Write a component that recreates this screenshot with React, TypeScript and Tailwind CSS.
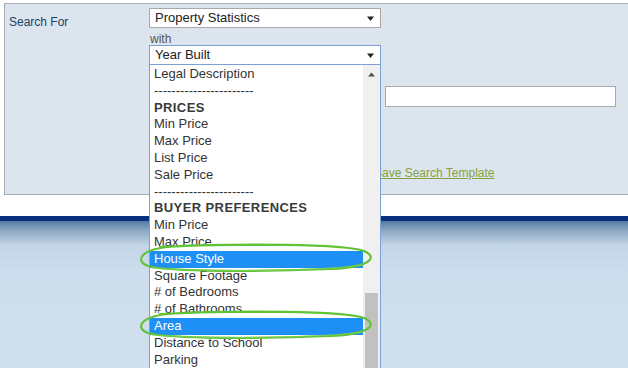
const items: { label: string; kind?: 'head' | 'sep' | 'sel' }[] = [
  { label: 'Legal Description' },
  { label: '-----------------------', kind: 'sep' },
  { label: 'PRICES', kind: 'head' },
  { label: 'Min Price' },
  { label: 'Max Price' },
  { label: 'List Price' },
  { label: 'Sale Price' },
  { label: '-----------------------', kind: 'sep' },
  { label: 'BUYER PREFERENCES', kind: 'head' },
  { label: 'Min Price' },
  { label: 'Max Price' },
  { label: 'House Style', kind: 'sel' },
  { label: 'Square Footage' },
  { label: '# of Bedrooms' },
  { label: '# of Bathrooms' },
  { label: 'Area', kind: 'sel' },
  { label: 'Distance to School' },
  { label: 'Parking' },
]

function Arrow({ up = false }: { up?: boolean }) {
  return (
    <svg width="7" height="5" viewBox="0 0 7 5" className="block">
      {up ? <path d="M3.5 0.5 L7 4.5 L0 4.5 Z" fill="#505050" /> : <path d="M0 0.5 L7 0.5 L3.5 5 Z" fill="#222" />}
    </svg>
  )
}

// hand-drawn green loop round a highlighted row
function Loop({ y }: { y: number }) {
  const p = `M 160 ${y - 11} C 240 ${y - 15}, 345 ${y - 14}, 364 ${y - 7} C 378 ${y - 1}, 372 ${y + 9}, 330 ${y + 11} C 260 ${y + 14}, 170 ${y + 14}, 148 ${y + 8} C 136 ${y + 4}, 138 ${y - 8}, 168 ${y - 11} C 200 ${y - 14}, 240 ${y - 13}, 262 ${y - 13}`
  return (
    <>
      <path d={p} fill="none" stroke="#62c236" strokeWidth="2.2" strokeLinecap="round" />
      <path
        d={`M 152 ${y + 10} C 210 ${y + 14}, 320 ${y + 13}, 362 ${y + 7}`}
        fill="none"
        stroke="#7ed05a"
        strokeWidth="1.2"
        strokeLinecap="round"
        opacity="0.8"
      />
    </>
  )
}

export default function App() {
  return (
    <div className="relative w-[628px] h-[368px] overflow-hidden bg-white font-['Liberation_Sans',Arial,sans-serif]">
      <div className="pt-[3px] pl-[4px]">
        <div className="relative w-[700px] h-[192px] border border-[#a3acb8] bg-[#dce5ed]">
          <div className="flex">
            <div className="w-[144px] pl-[4px] pt-[9px] text-[12px] text-[#1d3d6b]">Search For</div>
            <div className="w-[232px] pt-[4px]">
              <div className="flex items-center justify-between h-[20px] border border-[#a9a9a9] bg-white pl-[5px] pr-[6px] text-[13px] text-[#222]">
                <span>Property Statistics</span>
                <Arrow />
              </div>
              <div className="h-[17px] pt-[4px] pl-[1px] text-[12px] leading-[14px] text-[#555]">with</div>
              <div className="relative">
                <div className="flex items-center justify-between h-[20px] border border-[#7c9fd6] bg-white pl-[5px] pr-[6px] text-[13px] text-[#222]">
                  <span>Year Built</span>
                  <Arrow />
                </div>
                <div className="absolute left-0 top-full z-10 w-[232px] h-[310px] overflow-hidden border-x border-[#7c9fd6] bg-white flex">
                  <div className="flex-1 min-w-0 pt-[1px]">
                    {items.map((it, i) => (
                      <div
                        key={i}
                        className={
                          it.kind === 'sel'
                            ? 'h-[16.8px] leading-[16.8px] pl-[4px] text-[13px] bg-[#1e8ff5] text-white'
                            : it.kind === 'head'
                              ? 'h-[16.8px] leading-[16.8px] pl-[4px] text-[13px] font-bold tracking-[0.4px] text-[#3a3a3a]'
                              : 'h-[16.8px] leading-[16.8px] pl-[4px] text-[13px] text-[#333]'
                        }
                      >
                        {it.label}
                      </div>
                    ))}
                  </div>
                  <div className="w-[17px] bg-[#f0f0f0] flex flex-col items-center">
                    <div className="pt-[7px] pb-[6px]">
                      <Arrow up />
                    </div>
                    <div className="mt-[210px] w-[13px] flex-1 bg-[#c1c1c1]" />
                  </div>
                </div>
              </div>
            </div>
            <div className="pl-[4px] pt-[82px]">
              <div className="w-[231px] h-[21px] border border-[#a9a9a9] bg-white" />
            </div>
          </div>
          <div className="pl-[369px] pt-[53px]">
            <a className="text-[12px] text-[#87a23c] underline">Save Search Template</a>
          </div>
        </div>
      </div>
      <div className="mt-[21px] h-[5px] bg-[#07307f]" />
      <div className="h-[160px] bg-[linear-gradient(to_bottom,#557a9f_0px,#8eaac6_10px,#c2d4e6_24px,#cddded_50px,#d0e0ee_100%)]" />
      <svg className="absolute left-0 top-0 pointer-events-none z-20" width="628" height="368">
        <Loop y={258} />
        <Loop y={325} />
      </svg>
    </div>
  )
}
